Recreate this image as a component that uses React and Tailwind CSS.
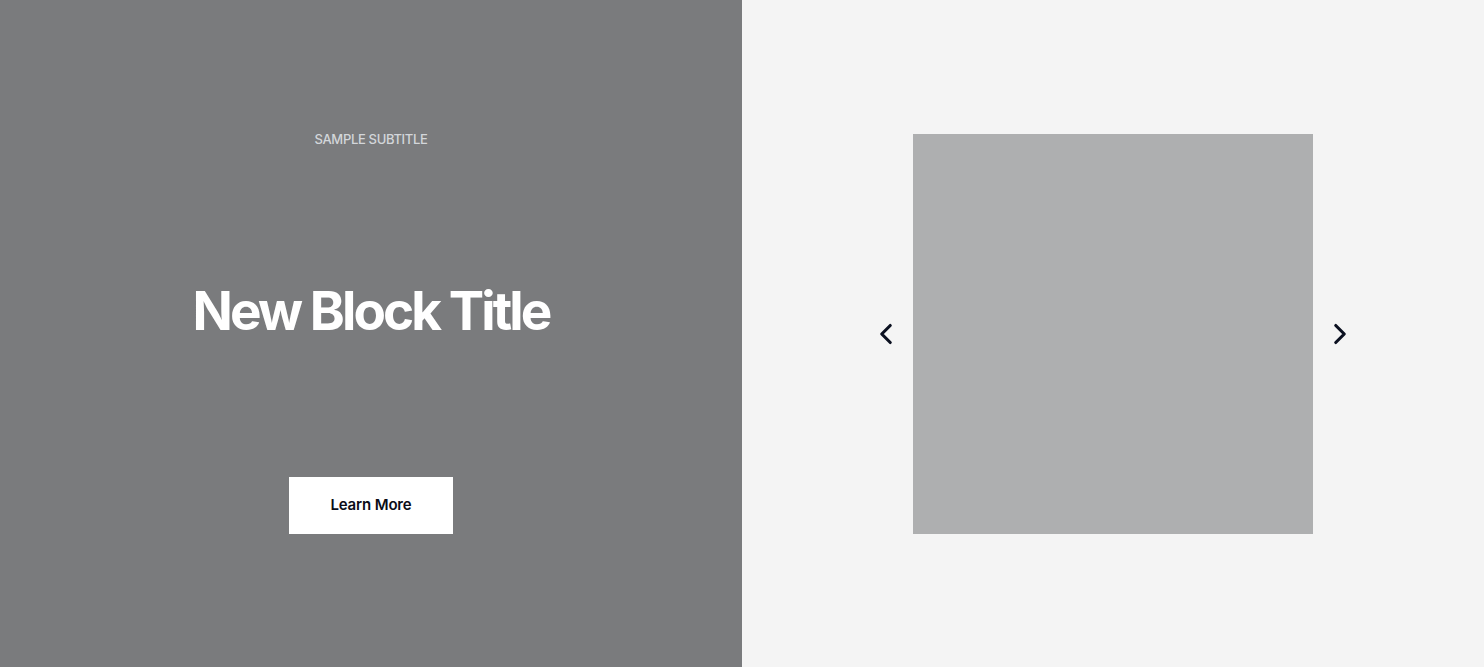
import { ChevronLeft, ChevronRight } from 'lucide-react';

export default function App() {
  return (
    <div className="flex h-[667px] w-full font-['Inter',sans-serif]">
      <div className="w-[742px] shrink-0 bg-[#7a7b7d] flex flex-col items-center pt-[131px]">
        <p className="text-[13px] font-medium uppercase text-[#d3d6da] tracking-[-0.025em] leading-4">
          Sample Subtitle
        </p>
        <h1 className="mt-[132px] text-[53px] font-bold text-white tracking-[-0.055em] leading-[64px]">
          New Block Title
        </h1>
        <button className="mt-[134px] w-[164px] h-[57px] bg-white text-[15px] font-semibold text-[#0b0d17] tracking-[-0.01em]">
          Learn More
        </button>
      </div>
      <div className="flex-1 bg-[#f4f4f4] flex items-center justify-center gap-[10px]">
        <button className="text-[#0b1020]">
          <ChevronLeft className="h-[34px] w-[34px]" strokeWidth={2.2} />
        </button>
        <div className="w-[400px] h-[400px] bg-[#aeafb0]" />
        <button className="text-[#0b1020]">
          <ChevronRight className="h-[34px] w-[34px]" strokeWidth={2.2} />
        </button>
      </div>
    </div>
  );
}
